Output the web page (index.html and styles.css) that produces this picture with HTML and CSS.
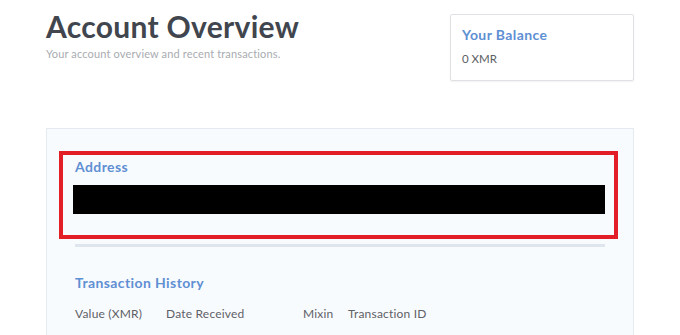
FILE: index.html
```html
<!DOCTYPE html>
<html lang="en">

<head>
    <meta charset="UTF-8">
    <meta name="viewport" content="width=device-width, initial-scale=1.0">
    <title>Account Overview</title>
    <link rel="stylesheet" href="styles.css">
</head>

<body>
    <div class="page">
        <div class="header">
            <div class="intro">
                <h1>Account Overview</h1>
                <p>Your account overview and recent transactions.</p>
            </div>
            <div class="balance">
                <h3>Your Balance</h3>
                <p>0 XMR</p>
            </div>
        </div>

        <div class="panel">
            <div class="address">
                <h3>Address</h3>
                <div class="address-value"></div>
            </div>
            <div class="divider"></div>
            <div class="history">
                <h3>Transaction History</h3>
                <div class="history-head">
                    <span class="col-value">Value (XMR)</span>
                    <span class="col-date">Date Received</span>
                    <span class="col-mixin">Mixin</span>
                    <span class="col-id">Transaction ID</span>
                </div>
            </div>
        </div>
    </div>
</body>

</html>
```

FILE: styles.css
```css
* {
    margin: 0;
    padding: 0;
    box-sizing: border-box;
}

body {
    font-family: Lato, "Open Sans", Arial, sans-serif;
    background-color: #fff;
    color: #555;
}

.page {
    width: 588px;
    margin-left: 46px;
}

.header {
    display: flex;
    justify-content: space-between;
    align-items: flex-start;
    height: 128px;
    padding-top: 7px;
}

.intro h1 {
    font-size: 30px;
    line-height: 38px;
    font-weight: 700;
    color: #41464e;
    letter-spacing: 0.3px;
}

.intro p {
    margin-top: 2px;
    font-size: 11px;
    letter-spacing: 0.15px;
    color: #a9acb1;
}

.balance {
    width: 184px;
    height: 67px;
    margin-top: 7px;
    padding: 12px 11px;
    border: 1px solid #dfe1e4;
    border-radius: 2px;
    box-shadow: 0 1px 2px rgba(0, 0, 0, 0.06);
}

.balance h3,
.address h3,
.history h3 {
    font-size: 14px;
    line-height: 16px;
    font-weight: 700;
    letter-spacing: 0.4px;
    color: #5f8fd3;
}

.balance p {
    margin-top: 9px;
    font-size: 11.5px;
    color: #5a5d62;
}

.panel {
    height: 220px;
    background-color: #f8fbfe;
    border: 1px solid #e4eaf0;
    border-bottom: none;
}

.address {
    margin: 22px 15px 0 12px;
    height: 88px;
    padding: 4px 9px 0 10px;
    border: 4px solid #e21e26;
}

.address h3 {
    margin-left: 2px;
}

.address-value {
    height: 29px;
    margin-top: 10px;
    background-color: #000;
}

.divider {
    height: 3px;
    margin: 5px 28px 0 28px;
    background-color: #dfe5ec;
}

.history {
    padding: 28px 28px 0 28px;
}

.history-head {
    display: flex;
    margin-top: 15px;
    font-size: 12px;
    line-height: 16px;
    letter-spacing: 0.2px;
    color: #5e6166;
}

.col-value {
    width: 91px;
}

.col-date {
    width: 137px;
}

.col-mixin {
    width: 45px;
}
```
